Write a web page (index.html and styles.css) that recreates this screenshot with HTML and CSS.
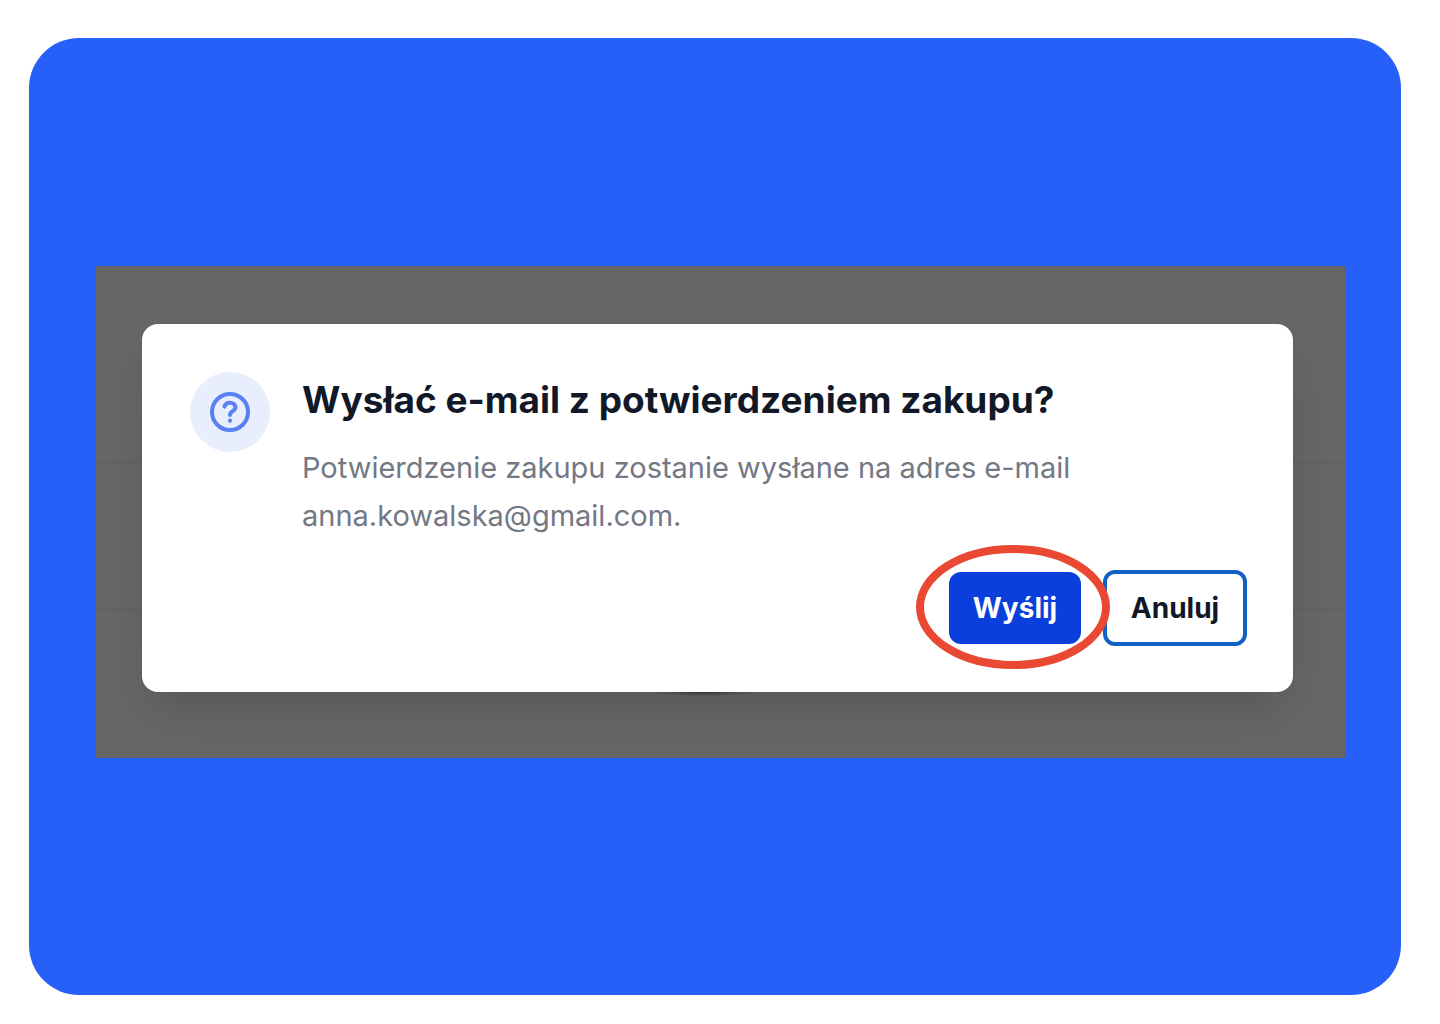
FILE: index.html
```html
<!DOCTYPE html>
<html lang="pl">
<head>
  <meta charset="UTF-8">
  <meta name="viewport" content="width=device-width, initial-scale=1">
  <title>Potwierdzenie zakupu</title>
  <link rel="stylesheet" href="styles.css">
</head>
<body>
  <main class="panel">
    <div class="backdrop">
      <section class="dialog" role="dialog" aria-labelledby="dialogTitle" aria-describedby="dialogText">
        <div class="dialog-body">
          <div class="dialog-icon">
            <svg viewBox="0 0 40 40" width="40" height="40" aria-hidden="true">
              <circle cx="20" cy="20" r="18"/>
              <path d="M14.400 14.600c.8-2.500 2.900-3.800 5.600-3.800 3.100 0 5.400 1.900 5.400 4.500 0 2.100-1.300 3.200-3.100 4.100-1.700.9-2.300 1.600-2.300 3.600"/>
              <path d="M20 28.400v.3"/>
            </svg>
          </div>
          <div class="dialog-content">
            <h1 class="dialog-title" id="dialogTitle">Wysłać e-mail z potwierdzeniem zakupu?</h1>
            <p class="dialog-text" id="dialogText">Potwierdzenie zakupu zostanie wysłane na adres e-mail<br>anna.kowalska@gmail.com.</p>
          </div>
        </div>
        <div class="dialog-actions">
          <div class="highlighted">
            <button type="button" class="btn btn-primary">Wyślij</button>
            <svg class="highlight" viewBox="0 0 196 126" width="196" height="126" aria-hidden="true">
              <ellipse cx="96" cy="62" rx="93" ry="58"/>
            </svg>
          </div>
          <button type="button" class="btn btn-outline">Anuluj</button>
        </div>
      </section>
    </div>
  </main>
</body>
</html>
```
FILE: styles.css
```css
* {
  box-sizing: border-box;
}

body {
  margin: 0;
  min-height: 100vh;
  padding: 38px 39px 29px 29px;
  display: flex;
  background: #fff;
  font-family: Inter, "Noto Sans", sans-serif;
}

.panel {
  flex: 1;
  display: flex;
  flex-direction: column;
  justify-content: center;
  padding: 0 56px 10px 67px;
  background: #2760f8;
  border-radius: 50px;
}

/* dimmed page with faint table rows behind the dialog */
.backdrop {
  padding: 58px 52px 66px 46px;
  background:
    radial-gradient(closest-side, #3c3c3c, transparent) 556px 422px / 104px 8px no-repeat,
    linear-gradient(#636363, #636363) 0 196px / 100% 2px no-repeat,
    linear-gradient(#636363, #636363) 0 342px / 100% 2px no-repeat,
    #666;
}

.dialog {
  padding: 48px 46px 46px 48px;
  background: #fff;
  border-radius: 16px;
  box-shadow: 0 24px 48px -16px rgba(0, 0, 0, 0.2);
}

.dialog-body {
  display: flex;
  gap: 32px;
}

.dialog-icon {
  flex: none;
  width: 80px;
  height: 80px;
  display: flex;
  align-items: center;
  justify-content: center;
  border-radius: 50%;
  background: #e9eeff;
}

.dialog-icon svg {
  overflow: visible;
  fill: none;
  stroke: #5a82ee;
  stroke-width: 4;
  stroke-linecap: round;
  stroke-linejoin: round;
}

.dialog-title {
  margin: 0 0 16px;
  font-size: 37px;
  line-height: 56px;
  font-weight: 700;
  color: #111827;
}

.dialog-text {
  margin: 0;
  font-size: 29px;
  line-height: 48px;
  color: #737884;
}

.dialog-actions {
  display: flex;
  justify-content: flex-end;
  align-items: center;
  gap: 22px;
  margin-top: 30px;
}

.highlighted {
  position: relative;
}

/* hand-drawn marker around the main action */
.highlight {
  position: absolute;
  top: 50%;
  left: 50%;
  transform: translate(-50%, -50%);
  overflow: visible;
  fill: none;
  stroke: #e94832;
  stroke-width: 8;
  pointer-events: none;
}

.btn {
  display: block;
  font-family: inherit;
  font-size: 28px;
  line-height: 40px;
  font-weight: 700;
  border-radius: 12px;
  cursor: pointer;
}

.btn-primary {
  min-width: 132px;
  padding: 16px 20px;
  border: none;
  background: #0a3fdc;
  color: #fff;
}

.btn-outline {
  min-width: 144px;
  padding: 14px 20px;
  border: 4px solid #1160c4;
  background: #fff;
  color: #111827;
}
```
